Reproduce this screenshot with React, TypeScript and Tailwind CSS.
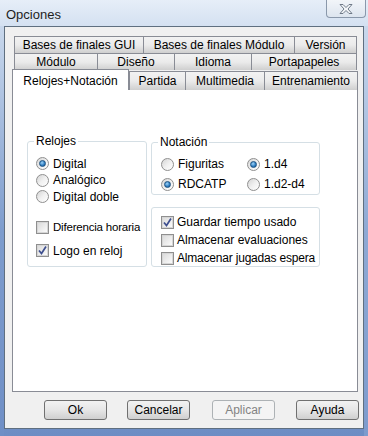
import React from "react";

const font = { fontFamily: '"Liberation Sans", Arial, sans-serif' };

const Radio = ({ checked }: { checked?: boolean }) => (
  <span className="relative flex h-[13px] w-[13px] shrink-0 items-center justify-center rounded-full border border-[#8f8f8f] bg-gradient-to-br from-[#d4d4d4] via-[#f0f0f0] to-[#ffffff]">
    {checked && (
      <span className="h-[7px] w-[7px] rounded-full border border-[#1d5281] bg-[radial-gradient(circle_at_40%_35%,#9fd3f7,#2b7bc0_60%,#1b4f85)]" />
    )}
  </span>
);

const Check = ({ checked }: { checked?: boolean }) => (
  <span className="flex h-[13px] w-[13px] shrink-0 items-center justify-center border border-[#8f8f8f] bg-white">
    <span className="flex h-[11px] w-[11px] items-center justify-center border border-[#d6d6d6] bg-gradient-to-br from-[#dcdcdc] to-[#fbfbfb]">
      {checked && (
        <svg width="9" height="9" viewBox="0 0 9 9">
          <path d="M1 4.5 L3.5 7.5 L8 0.5" fill="none" stroke="#3e4f8f" strokeWidth="1.7" />
        </svg>
      )}
    </span>
  </span>
);

const Tab = ({ label, w }: { label: string; w: string }) => (
  <div
    className={`${w} flex h-full items-center justify-center border border-[#898c95] border-b-0 bg-gradient-to-b from-[#f2f2f2] via-[#ebebeb] to-[#cfcfcf] text-[12px] text-black -ml-px first:ml-0 whitespace-nowrap`}
  >
    {label}
  </div>
);

const Btn = ({ label, disabled, w = "w-[63px]" }: { label: string; disabled?: boolean; w?: string }) => (
  <div
    className={`${w} flex h-[20px] items-center justify-center rounded-[3px] border text-[12px] ${
      disabled
        ? "border-[#adb2b5] bg-[#f4f4f4] text-[#838383]"
        : "border-[#707070] bg-gradient-to-b from-[#f2f2f2] via-[#e6e6e6] to-[#cfcfcf] text-black"
    }`}
  >
    {label}
  </div>
);

export default function App() {
  return (
    <div
      style={font}
      className="flex h-[436px] w-[368px] flex-col overflow-hidden bg-gradient-to-b from-[#dfe9f5] via-[#9db4d8] to-[#6d8dc4]"
    >
      {/* title bar */}
      <div className="flex h-[26px] shrink-0 items-start justify-between bg-gradient-to-b from-[#e6eef8] to-[#d4e1f1]">
        <div className="pl-[6px] pt-[5px] text-[13px] text-[#1e1e1e]">Opciones</div>
        <div className="mr-[2px] flex h-[18px] w-[40px] items-center justify-center rounded-b-[4px] border border-t-0 border-[#8a98ab] bg-gradient-to-b from-[#f2f5f9] to-[#dde5ef]">
          <svg width="14" height="10" viewBox="0 0 14 10">
            <path
              d="M1 0.5 H4 L7 3.5 L10 0.5 H13 L9 5 L13 9.5 H10 L7 6.5 L4 9.5 H1 L5 5 Z"
              fill="#f5f7fa"
              stroke="#6f7a88"
              strokeWidth="1"
              strokeLinejoin="round"
            />
          </svg>
        </div>
      </div>

      <div className="flex flex-1">
        {/* left frame */}
        <div className="w-[4px] shrink-0 bg-gradient-to-b from-[#c9d8ec] via-[#7d9ccd] to-[#6f8fc6]" />
        {/* client */}
        <div className="flex h-[403px] w-[360px] flex-col border border-[#5f6f80] bg-[#f0f0f0] pl-[7px] pt-[9px]">
          {/* tab rows */}
          <div className="ml-[2px] flex h-[17px]">
            <Tab label="Bases de finales GUI" w="w-[130px]" />
            <Tab label="Bases de finales Módulo" w="w-[152px]" />
            <Tab label="Versión" w="w-[63px]" />
          </div>
          <div className="ml-[2px] flex h-[17px]">
            <Tab label="Módulo" w="w-[84px]" />
            <Tab label="Diseño" w="w-[78px]" />
            <Tab label="Idioma" w="w-[78px]" />
            <Tab label="Portapapeles" w="w-[106px]" />
          </div>
          <div className="relative z-10 -mb-px flex h-[20px] items-end">
            <div className="flex h-[21px] w-[117px] -mt-px items-start justify-center self-start border border-b-0 border-[#898c95] bg-white pt-[2px] text-[12px] text-black whitespace-nowrap">
              Relojes+Notación
            </div>
            <div className="flex h-[19px] items-stretch">
              <Tab label="Partida" w="w-[57px]" />
              <Tab label="Multimedia" w="w-[80px]" />
              <Tab label="Entrenamiento" w="w-[94px]" />
            </div>
          </div>

          {/* panel */}
          <div className="h-[303px] w-[346px] border border-[#898c95] bg-white pl-[14px] pt-[51px] text-[12px] text-black whitespace-nowrap">
            <div className="flex gap-[4px]">
              {/* Relojes */}
              <div className="relative h-[126px] w-[120px] rounded-[3px] border border-[#d5dfe5]">
                <span className="absolute -top-[8px] left-[6px] bg-white px-[2px] leading-[14px]">Relojes</span>
                <div className="flex flex-col pl-[8px] pt-[13px]">
                  <label className="flex h-[17px] items-center gap-[4px]">
                    <Radio checked />
                    Digital
                  </label>
                  <label className="flex h-[16px] items-center gap-[4px]">
                    <Radio />
                    Analógico
                  </label>
                  <label className="flex h-[17px] items-center gap-[4px]">
                    <Radio />
                    Digital doble
                  </label>
                  <label className="mt-[14px] flex h-[17px] w-[110px] items-center gap-[4px] overflow-hidden">
                    <Check />
                    <span className="text-[11.5px] tracking-[-0.2px]">Diferencia horaria</span>
                  </label>
                  <label className="mt-[6px] flex h-[17px] items-center gap-[4px]">
                    <Check checked />
                    Logo en reloj
                  </label>
                </div>
              </div>

              <div className="flex flex-col">
                {/* Notación */}
                <div className="relative mt-px h-[53px] w-[169px] rounded-[3px] border border-[#d5dfe5]">
                  <span className="absolute -top-[8px] left-[6px] bg-white px-[2px] leading-[14px]">Notación</span>
                  <div className="grid grid-cols-[86px_1fr] pl-[9px] pt-[11px]">
                    <label className="flex h-[20px] items-center gap-[4px]">
                      <Radio />
                      Figuritas
                    </label>
                    <label className="flex h-[20px] items-center gap-[4px]">
                      <Radio checked />
                      1.d4
                    </label>
                    <label className="flex h-[20px] items-center gap-[4px]">
                      <Radio checked />
                      RDCATP
                    </label>
                    <label className="flex h-[20px] items-center gap-[4px]">
                      <Radio />
                      1.d2-d4
                    </label>
                  </div>
                </div>

                <div className="mt-[12px] h-[60px] w-[169px] rounded-[3px] border border-[#d5dfe5] pl-[9px] pt-[5px]">
                  <label className="flex h-[18px] items-center gap-[3px]">
                    <Check checked />
                    Guardar tiempo usado
                  </label>
                  <label className="flex h-[18px] items-center gap-[3px]">
                    <Check />
                    Almacenar evaluaciones
                  </label>
                  <label className="flex h-[18px] items-center gap-[3px] tracking-[-0.2px]">
                    <Check />
                    Almacenar jugadas espera
                  </label>
                </div>
              </div>
            </div>
          </div>

          {/* buttons */}
          <div className="ml-[32px] mt-[8px] flex">
            <Btn label="Ok" />
            <div className="w-[20px]" />
            <Btn label="Cancelar" />
            <div className="w-[22px]" />
            <Btn label="Aplicar" disabled />
            <div className="w-[21px]" />
            <Btn label="Ayuda" />
          </div>
        </div>
        {/* right frame */}
        <div className="flex-1 bg-gradient-to-b from-[#c9d8ec] via-[#8ea9d4] to-[#7d9bcd]" />
      </div>
    </div>
  );
}
